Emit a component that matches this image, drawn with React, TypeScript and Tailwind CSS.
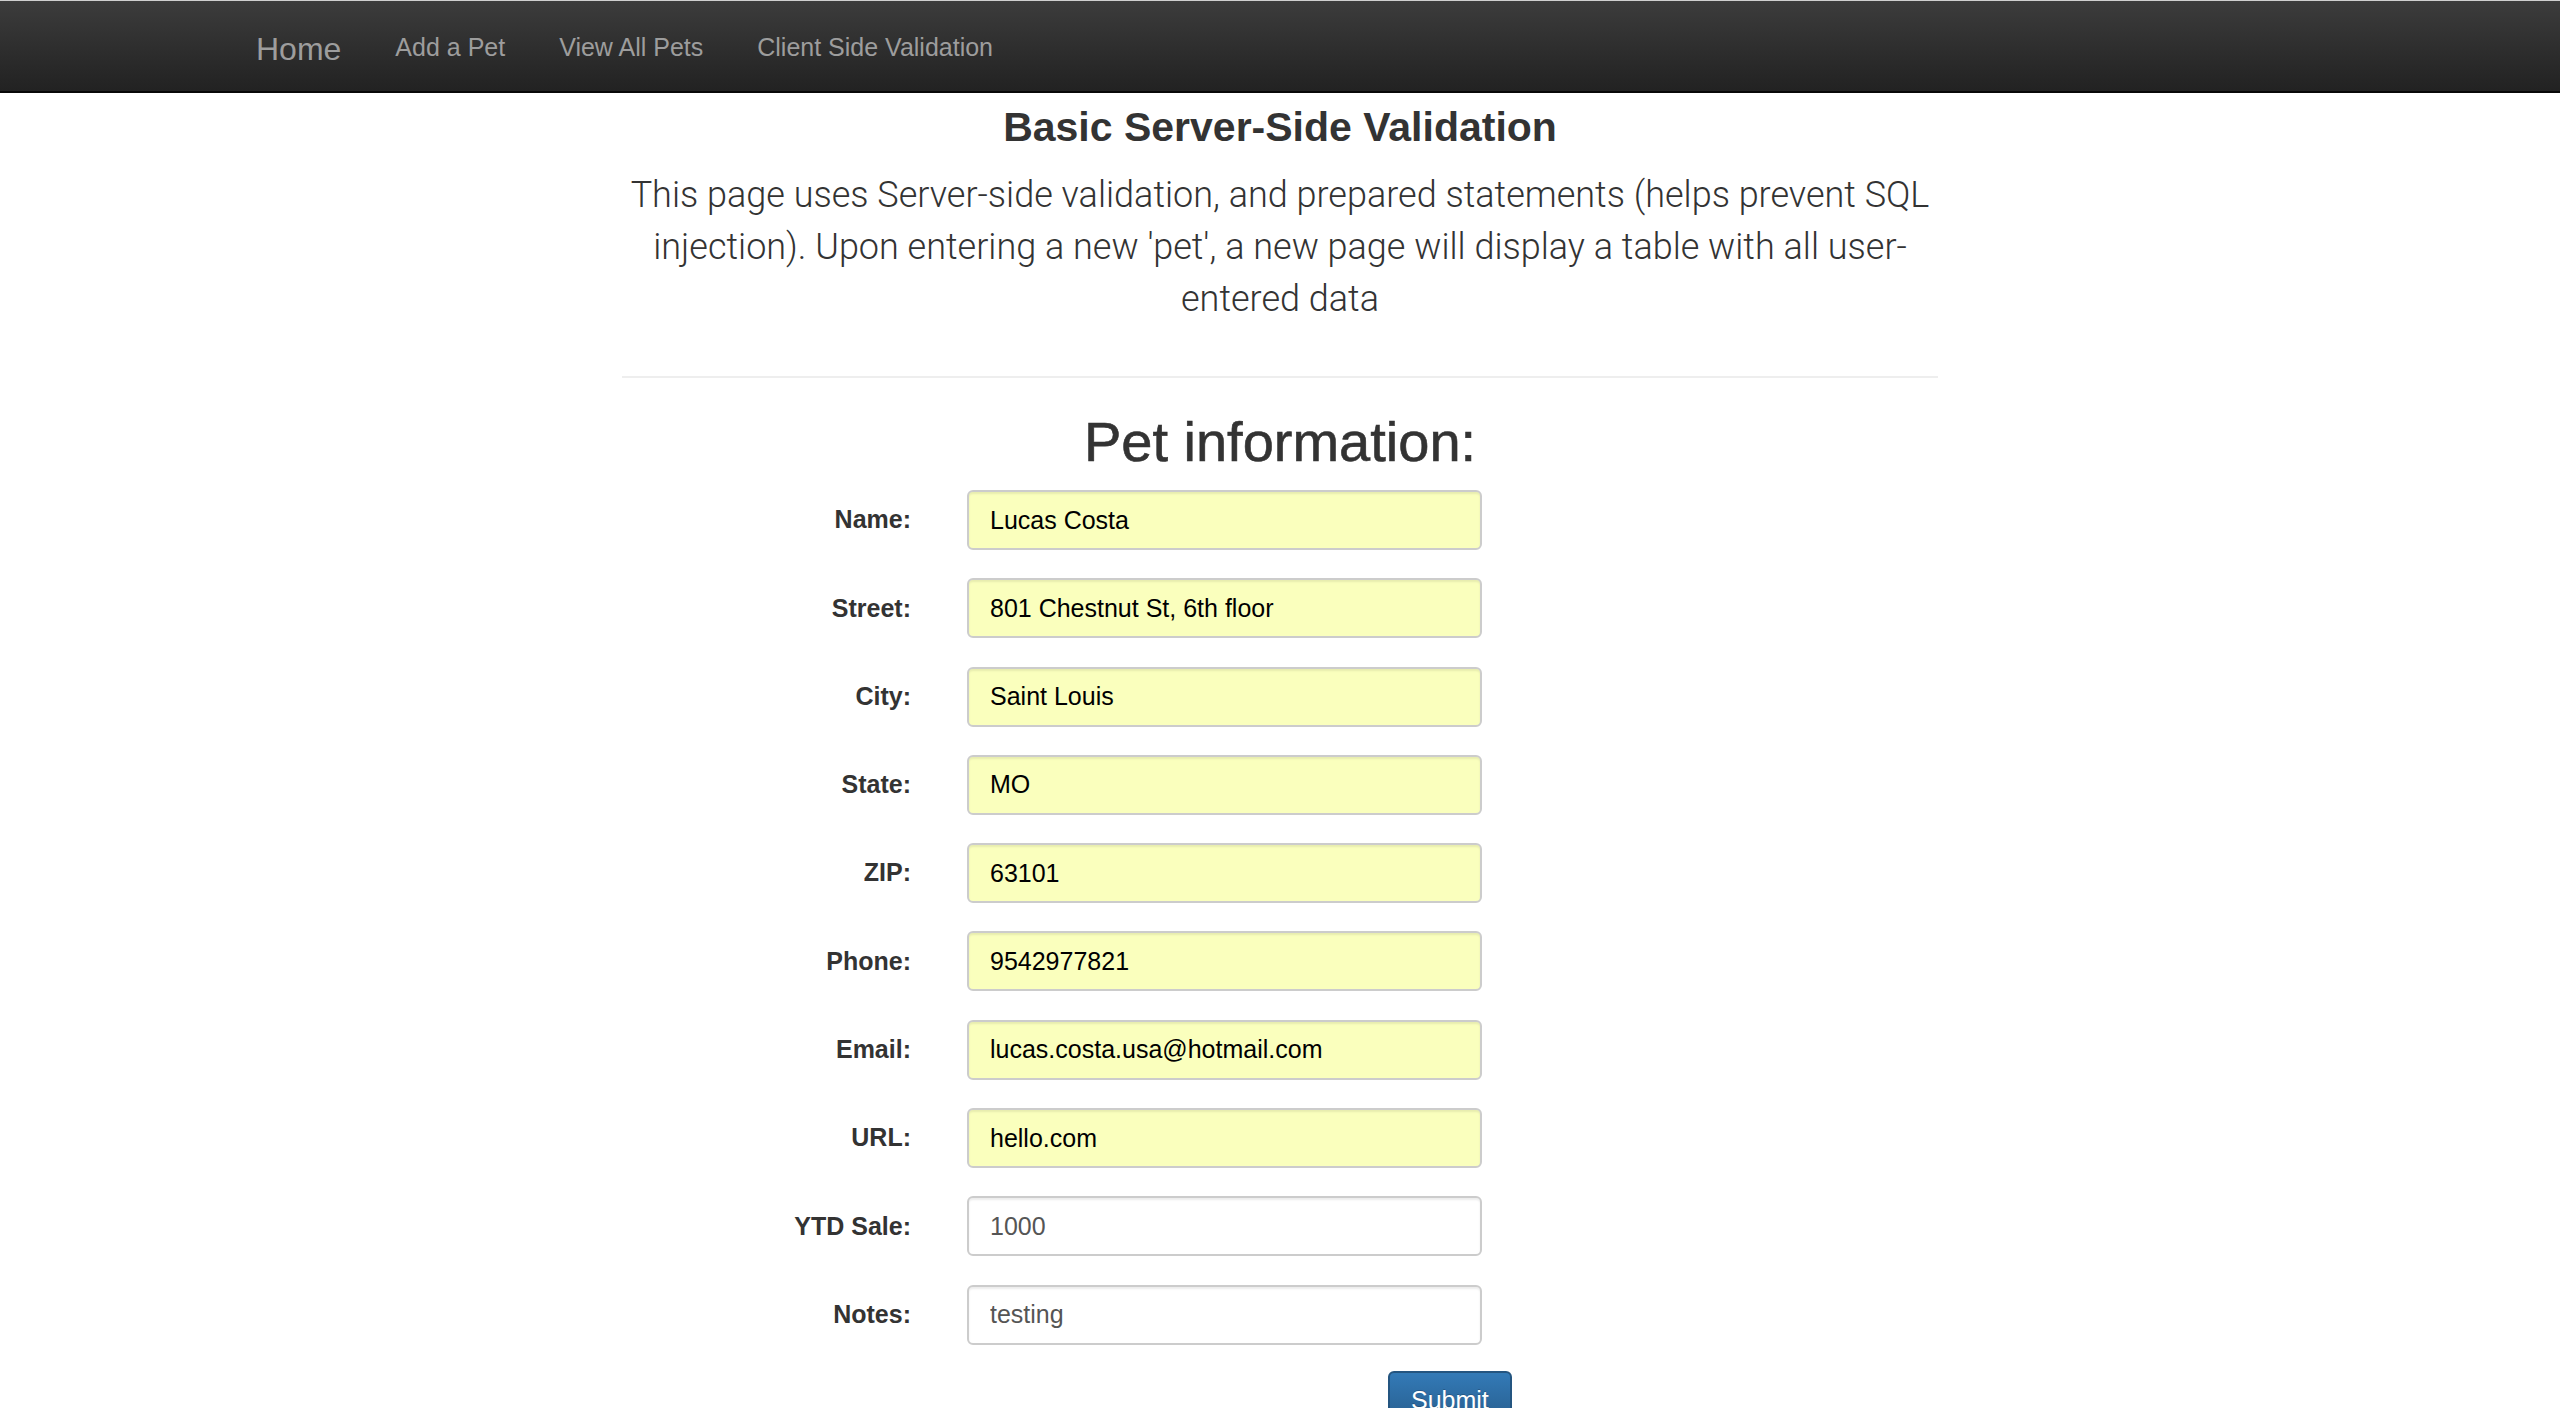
const fields = [
  { label: 'Name:', value: 'Lucas Costa', autofill: true },
  { label: 'Street:', value: '801 Chestnut St, 6th floor', autofill: true },
  { label: 'City:', value: 'Saint Louis', autofill: true },
  { label: 'State:', value: 'MO', autofill: true },
  { label: 'ZIP:', value: '63101', autofill: true },
  { label: 'Phone:', value: '9542977821', autofill: true },
  { label: 'Email:', value: 'lucas.costa.usa@hotmail.com', autofill: true },
  { label: 'URL:', value: 'hello.com', autofill: true },
  { label: 'YTD Sale:', value: '1000', autofill: false },
  { label: 'Notes:', value: 'testing', autofill: false },
];

const navLinks = ['Add a Pet', 'View All Pets', 'Client Side Validation'];

export default function App() {
  return (
    <div className="min-h-screen bg-white font-['Liberation_Sans',Arial,sans-serif] text-[#333]">
      {/* navbar */}
      <nav className="h-[93px] border-t border-t-[#cfcfcf] border-b-2 border-b-[#080808] bg-gradient-to-b from-[#3c3c3c] to-[#222]">
        <div className="flex items-start gap-[54px] pl-[256px] pt-[32px]">
          <a className="text-[32px] leading-[32px] text-[#9d9d9d]">Home</a>
          {navLinks.map((link) => (
            <a key={link} className="mt-[-2.5px] text-[25px] leading-[32px] text-[#9d9d9d]">
              {link}
            </a>
          ))}
        </div>
      </nav>

      <div className="mx-auto w-[1316px]">
        <h3 className="mt-[11px] text-center text-[41px] font-bold leading-[46px] text-[#333]">
          Basic Server-Side Validation
        </h3>
        <p className="mt-[19px] text-center font-['Roboto','Liberation_Sans',sans-serif] text-[36px] font-light leading-[52px] text-[#333]">
          This page uses Server-side validation, and prepared statements (helps prevent SQL injection). Upon
          entering a new 'pet', a new page will display a table with all user-entered data
        </p>
        <hr className="mt-[51px] border-t-2 border-[#eee]" />

        <h2 className="mt-[33px] text-center text-[56px] leading-[62px] text-[#333] [-webkit-text-stroke:0.6px_#333]">
          Pet information:
        </h2>

        <form className="mt-[17px] flex flex-col gap-[28.3px]" onSubmit={(e) => e.preventDefault()}>
          {fields.map((f) => (
            <div key={f.label} className="flex items-center">
              <label className="w-[289px] text-right text-[25px] font-bold text-[#333]">{f.label}</label>
              <input
                readOnly
                value={f.value}
                className={`ml-[56px] h-[60px] w-[515px] rounded-[6px] border-2 border-[#ccc] px-[21px] text-[25px] shadow-[inset_0_2px_2px_rgba(0,0,0,0.075)] outline-none ${
                  f.autofill ? 'bg-[#faffbd] text-black' : 'bg-white text-[#555]'
                }`}
              />
            </div>
          ))}
        </form>

        <div className="mt-[26px] pl-[766px]">
          <button
            type="button"
            className="h-[60px] rounded-[6px] border-2 border-[#245580] bg-gradient-to-b from-[#337ab7] to-[#265a88] px-[21px] text-[25px] text-white [text-shadow:0_-1px_0_rgba(0,0,0,0.2)]"
          >
            Submit
          </button>
        </div>
      </div>
    </div>
  );
}
